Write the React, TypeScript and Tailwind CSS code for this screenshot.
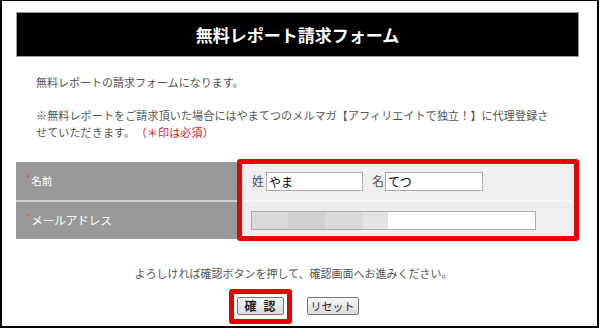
export default function App() {
  return (
    <div className="w-[599px] h-[328px] bg-white border-x-2 border-t border-b-2 border-black font-['Noto_Sans_CJK_JP','Liberation_Sans',sans-serif] text-[#555] pl-[14px] pr-[18px] pt-[11px]">
      <div className="h-[45px] bg-black border border-[#999] flex items-center justify-center">
        <h1 className="text-white text-[17px] font-bold leading-none">無料レポート請求フォーム</h1>
      </div>

      <div className="px-[20px] text-[11px]">
        <p className="mt-[16px] leading-[18px]">無料レポートの請求フォームになります。</p>
        <p className="mt-[16px] leading-[17px] tracking-[0.15px] whitespace-nowrap">
          ※無料レポートをご請求頂いた場合にはやまてつのメルマガ【アフィリエイトで独立！】に代理登録さ
          <br />
          せていただきます。
          <span className="ml-[6px] text-[#d42020]">（＊印は必須）</span>
        </p>
      </div>

      <div className="relative mt-[21px]">
        <div className="flex h-[38px]">
          <div className="w-[222px] bg-[#999] text-white flex items-center pl-[10px]">
            <span className="text-[#ff4a4a] text-[11px] self-start mt-[11px] leading-none">*</span>
            <span className="text-[10.5px] leading-none">名前</span>
          </div>
          <div className="flex-1 bg-[#eee] flex items-center pl-[14px] text-[12px] text-[#555]">
            <span className="leading-none">姓</span>
            <input
              readOnly
              value="やま"
              className="ml-[2px] w-[97px] h-[19px] border border-[#aaa] bg-white text-[12px] text-black px-[2px] outline-none"
            />
            <span className="ml-[9px] leading-none">名</span>
            <input
              readOnly
              value="てつ"
              className="ml-[1px] w-[98px] h-[19px] border border-[#aaa] bg-white text-[12px] text-black px-[2px] outline-none"
            />
          </div>
        </div>
        <div className="flex h-[39px]">
          <div className="w-[222px] bg-[#999] text-white flex items-center pl-[10px] border-t-2 border-[#d2d2d2]">
            <span className="text-[#ff4a4a] text-[11px] self-start mt-[10px] leading-none">*</span>
            <span className="text-[11.5px] leading-none">メールアドレス</span>
          </div>
          <div className="flex-1 bg-[#eee] flex items-center pl-[13px] border-t-2 border-[#fafafa]">
            <div className="w-[285px] h-[19px] border border-[#aaa] bg-white flex">
              <div className="w-[36px] h-full bg-[#d9d9d9]" />
              <div className="w-[37px] h-full bg-[#d1d1d1]" />
              <div className="w-[38px] h-full bg-[#dadada]" />
              <div className="w-[25px] h-full bg-[#e3e3e5]" />
            </div>
          </div>
        </div>
        <div className="absolute left-[221px] right-0 -top-[3px] -bottom-[2px] border-[5px] border-[#e60000] rounded-[3px] pointer-events-none" />
      </div>

      <p className="mt-[25px] text-center text-[11px] leading-[18px] pr-[8px]">
        よろしければ確認ボタンを押して、確認画面へお進みください。
      </p>

      <div className="mt-[15px] flex justify-center gap-[23px]">
        <div className="relative">
          <button className="w-[47px] h-[18px] border border-[#777] rounded-[2px] bg-gradient-to-b from-[#f7f7f7] to-[#dcdcdc] text-[12px] font-bold text-[#222] leading-none flex items-center justify-center">
            <span>確</span>
            <span className="ml-[7px]">認</span>
          </button>
          <div className="absolute -left-[8px] -right-[8px] -top-[8px] -bottom-[9px] border-[5px] border-[#e60000] rounded-[3px] pointer-events-none" />
        </div>
        <button className="w-[52px] h-[18px] border border-[#777] rounded-[2px] bg-gradient-to-b from-[#f7f7f7] to-[#dcdcdc] text-[11px] text-[#222] leading-none flex items-center justify-center">
          リセット
        </button>
      </div>
    </div>
  );
}
